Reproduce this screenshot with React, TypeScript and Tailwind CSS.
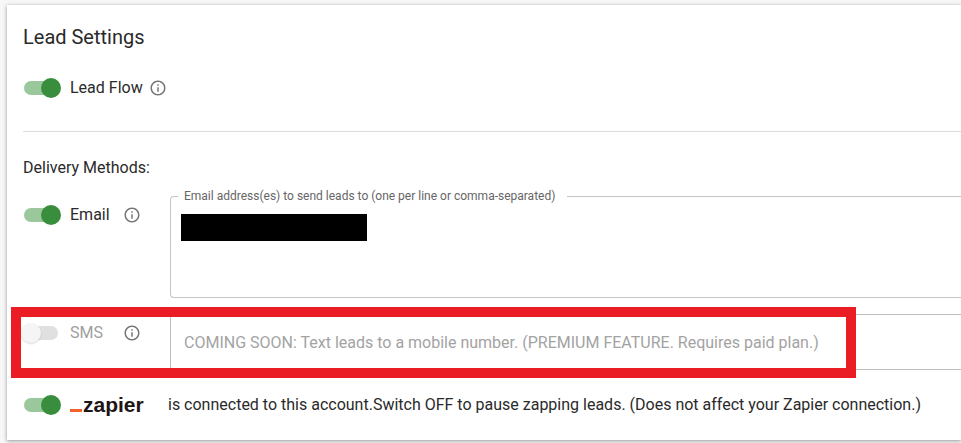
import { useState } from 'react';
import { MdInfoOutline } from 'react-icons/md';

interface SwitchProps {
  id: string;
  checked: boolean;
  disabled?: boolean;
  label?: string;
  onChange?: (checked: boolean) => void;
}

function Switch({ id, checked, disabled, label, onChange }: SwitchProps) {
  return (
    <span className="relative flex h-[38px] w-[38px] shrink-0 items-center">
      <input
        id={id}
        type="checkbox"
        role="switch"
        aria-label={label}
        checked={checked}
        disabled={disabled}
        onChange={(e) => onChange?.(e.target.checked)}
        className="peer ml-px h-3.5 w-[34px] appearance-none rounded-full bg-[#9c9c9c] checked:bg-[#9bc79d] disabled:bg-[#e0e0e0]"
      />
      <span className="pointer-events-none absolute -left-0.5 top-[9px] h-5 w-5 rounded-full bg-[#fafafa] shadow-[0_1px_3px_rgba(0,0,0,0.25)] peer-checked:left-[18px] peer-checked:bg-[#388e3c] peer-checked:shadow-none peer-disabled:bg-[#f5f5f5] peer-disabled:shadow-[0_1px_2px_rgba(0,0,0,0.15)]" />
    </span>
  );
}

function InfoButton({ about }: { about: string }) {
  return (
    <button type="button" aria-label={`About ${about}`} className="text-[#757575]">
      <MdInfoOutline size={18} />
    </button>
  );
}

function ZapierLogo() {
  return (
    <span className="flex items-baseline gap-px">
      <span className="h-[3px] w-3 bg-[#f2622a]" />
      <span className="font-['Liberation_Sans',sans-serif] text-[21px] leading-6 font-bold text-[#201515]">zapier</span>
    </span>
  );
}

export default function App() {
  const [leadFlow, setLeadFlow] = useState(true);
  const [email, setEmail] = useState(true);
  const [zapier, setZapier] = useState(true);
  const [addresses, setAddresses] = useState('');

  return (
    <div className="overflow-hidden bg-[#f7f7f7] pt-[5px] pb-[3px] pl-[7px] font-['Roboto',sans-serif] text-base text-[#2a2a2a]">
      <main className="bg-white py-4 pl-4 shadow-[0_1px_4px_rgba(0,0,0,0.4)]">
        <h1 className="text-xl leading-8">Lead Settings</h1>

        <div className="mt-4 flex items-center">
          <Switch id="lead-flow" checked={leadFlow} onChange={setLeadFlow} />
          <label htmlFor="lead-flow" className="mr-1.5 ml-[9px]">Lead Flow</label>
          <InfoButton about="lead flow" />
        </div>

        <hr className="mt-6 border-[#dcdcdc]" />

        <h2 className="mt-6">Delivery Methods:</h2>

        {/* Email */}
        <div className="mt-4 flex items-start">
          <div className="flex w-[147px] shrink-0 items-center">
            <Switch id="email" checked={email} onChange={setEmail} />
            <label htmlFor="email" className="ml-[9px] w-[53px]">Email</label>
            <InfoButton about="email delivery" />
          </div>
          <div className="relative flex-1">
            <label htmlFor="addresses" className="absolute -top-2 left-2 bg-white pr-3 pl-1.5 text-xs text-[#666666]">
              Email address(es) to send leads to (one per line or comma-separated)
            </label>
            <textarea
              id="addresses"
              value={addresses}
              onChange={(e) => setAddresses(e.target.value)}
              className="block h-[102px] w-full resize-none rounded-l border border-r-0 border-[#c4c4c4] px-[13px] py-4 outline-none"
            />
            {/* hides the saved address */}
            <div className="absolute top-[18px] left-[11px] h-[27px] w-[186px] bg-black" />
          </div>
        </div>

        {/* SMS */}
        <div className="relative mt-4 flex items-start">
          <div className="flex w-[147px] shrink-0 items-center">
            <Switch id="sms" checked={false} disabled />
            <label htmlFor="sms" className="ml-[9px] w-[53px] text-[#9e9e9e]">SMS</label>
            <InfoButton about="SMS delivery" />
          </div>
          <input
            type="text"
            disabled
            aria-label="Mobile number"
            placeholder="COMING SOON: Text leads to a mobile number. (PREMIUM FEATURE. Requires paid plan.)"
            className="h-14 min-w-0 flex-1 rounded-l border border-r-0 border-[#bdbdbd] px-[13px] placeholder:text-[#a3a3a3]"
          />
          <div className="pointer-events-none absolute -top-[7px] -left-3 h-[71px] w-[845px] border-10 border-[#ea1c24]" />
        </div>

        {/* Zapier */}
        <div className="mt-4 flex items-center">
          <Switch id="zapier" label="Zapier" checked={zapier} onChange={setZapier} />
          <div className="ml-[9px] w-[98px] shrink-0">
            <ZapierLogo />
          </div>
          <p>
            is connected to this account.Switch OFF to pause zapping leads. (Does not affect your Zapier connection.)
          </p>
        </div>
      </main>
    </div>
  );
}
